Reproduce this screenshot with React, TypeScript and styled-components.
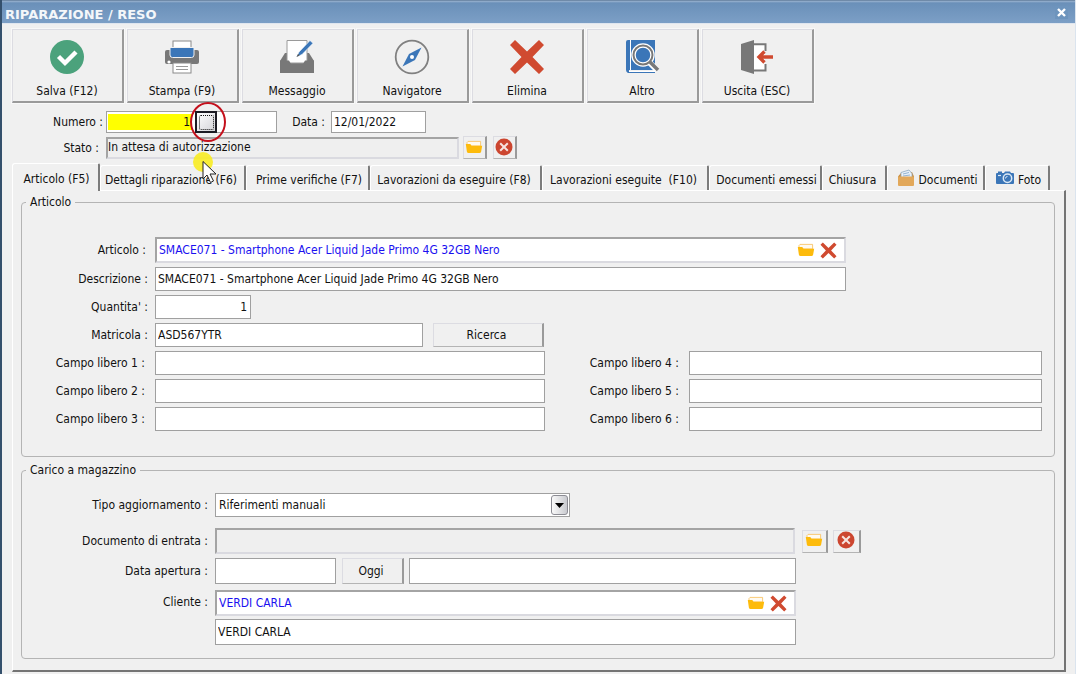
import React from "react";
import styled, { createGlobalStyle, css } from "styled-components";

const GlobalStyle = createGlobalStyle`
  * { box-sizing: border-box; }
  body { margin: 0; background: #f0f0f0; }
  body, button, input, select {
    font-family: "DejaVu Sans Condensed", "DejaVu Sans", sans-serif;
    font-size: 12px;
    line-height: 16px;
    color: #111;
  }
  svg { display: block; flex: none; }
`;

/* ---------- window ---------- */

const Window = styled.main`
  position: relative;
  min-height: 100vh;
  padding-bottom: 3px;
  border-left: 2px solid #34506c;
  border-right: 1px solid #dbe4ee;
  background: #f0f0f0;
`;

const TitleBar = styled.header`
  display: flex;
  align-items: center;
  justify-content: space-between;
  height: 24px;
  padding: 5px 7px 0 3px;
  border-top: 1px solid #6f8aa8;
  border-bottom: 1px solid #dfe6ef;
  background: linear-gradient(#9ab3cf 0, #6a90b9 2px, #7c9fc6 100%);
`;

const Title = styled.h1`
  margin: 0;
  font-family: "DejaVu Sans", sans-serif;
  font-size: 13px;
  line-height: 16px;
  font-weight: bold;
  color: #f4f7fa;
`;

const CloseButton = styled.button`
  display: grid;
  place-items: center;
  width: 13px;
  height: 13px;
  margin-bottom: 5px;
  padding: 0;
  border: 1px solid #6d94bd;
  background: #6d94bd;
`;

/* ---------- toolbar ---------- */

const Toolbar = styled.nav`
  display: flex;
  gap: 3px;
  padding: 5px 10px 0;
`;

const ToolButton = styled.button`
  display: flex;
  flex-direction: column;
  align-items: center;
  gap: 8px;
  width: 112px;
  height: 74px;
  padding: 9px 1px 0 0;
  border: solid;
  border-color: #dcdce2 #9a9a9a #9a9a9a #dcdce2;
  border-width: 1px 2px 2px 1px;
  background: #f0f0f0;
  outline: 1px solid #f8f8f8;
`;

/* ---------- fields ---------- */

const TextInput = styled.input<{ $w?: number; $h?: number; $right?: boolean }>`
  width: ${(p) => (p.$w ? `${p.$w}px` : "100%")};
  height: ${(p) => p.$h ?? 24}px;
  padding: 0 3px 0 2px;
  border: 1px solid #a0a0a0;
  border-radius: 0;
  outline: none;
  background: #fff;
  text-align: ${(p) => (p.$right ? "right" : "left")};
`;

const sunken = css`
  border: 2px solid;
  border-color: #a4a4a4 #dadae0 #dadae0 #a4a4a4;
`;

const LookupBox = styled.div<{ $w: number }>`
  ${sunken}
  display: flex;
  align-items: center;
  width: ${(p) => p.$w}px;
  height: 26px;
  padding-right: 4px;
  background: #fff;
`;

const LookupInput = styled.input`
  flex: 1;
  min-width: 0;
  padding: 0 2px;
  border: 0;
  outline: none;
  background: transparent;
  color: #1a10f0;
`;

const LookupButton = styled.button`
  display: grid;
  place-items: center;
  width: 23px;
  height: 20px;
  padding: 0;
  border: 0;
  background: transparent;
`;

const ReadOnlyInput = styled.input<{ $w: number; $h: number }>`
  ${sunken}
  width: ${(p) => p.$w}px;
  height: ${(p) => p.$h}px;
  padding: 0 0 2px;
  outline: none;
  background: #efefef;
`;

const raised = css`
  border: 1px solid;
  border-color: #dcdce2 #9a9a9a #b4b4b4 #dcdce2;
  border-right-width: 2px;
  background: #f0f0f0;
`;

const PushButton = styled.button<{ $w: number; $h: number }>`
  ${raised}
  width: ${(p) => p.$w}px;
  height: ${(p) => p.$h}px;
  padding: 0 3px 0 0;
`;

const IconButton = styled.button<{ $w: number }>`
  ${raised}
  display: grid;
  place-items: center;
  width: ${(p) => p.$w}px;
  height: 23px;
  padding: 0 2px 2px 0;
`;

/* ---------- record header ---------- */

const RecordHeader = styled.section`
  display: grid;
  gap: 3px;
  padding: 8px 10px 0;
`;

const HeaderRow = styled.div`
  display: flex;
  align-items: center;
`;

const HeaderLabel = styled.label<{ $w: number; $gap: number }>`
  width: ${(p) => p.$w}px;
  padding-right: ${(p) => p.$gap}px;
  text-align: right;
  white-space: nowrap;
`;

const NumberBox = styled.div`
  display: flex;
  align-items: center;
  width: 171px;
  height: 22px;
  border: 1px solid #a0a0a0;
  background: #fff;
`;

const NumberInput = styled.input`
  width: 84px;
  height: 16px;
  margin-left: 1px;
  padding: 0 2px 0 0;
  border: 0;
  outline: none;
  background: #ff0;
  text-align: right;
`;

const SuffixInput = styled.input`
  flex: 1;
  min-width: 0;
  height: 18px;
  border: 0;
  outline: none;
`;

const PickButton = styled.button`
  display: grid;
  place-items: center;
  width: 22px;
  height: 22px;
  margin-left: 3px;
  padding: 0;
  border: 2px solid #1c1c24;
  background: linear-gradient(135deg, #fff, #d4d4d8);

  &::after {
    content: "";
    width: 13px;
    height: 13px;
    border: 1px dotted #111;
    border-radius: 2px;
  }
`;

const StateButtons = styled.div`
  display: flex;
  gap: 6px;
  padding-left: 4px;
`;

/* ---------- tabs ---------- */

const TabList = styled.div`
  display: flex;
  align-items: flex-end;
  padding: 4px 10px 0;
`;

const Tab = styled.button<{ $w: number; $active?: boolean; $tight?: boolean }>`
  position: relative;
  display: flex;
  align-items: center;
  justify-content: center;
  gap: 4px;
  width: ${(p) => p.$w}px;
  height: ${(p) => (p.$active ? 28 : 25)}px;
  margin-bottom: ${(p) => (p.$active ? -1 : 0)}px;
  padding: ${(p) => (p.$tight ? "4px 3px 0 0" : p.$active ? "2px 0 0 2px" : "4px 0 0 3px")};
  border: solid;
  border-width: 1px 2px 0 1px;
  border-color: #fff #7c7c7c #fff #fff;
  border-radius: 3px 2px 0 0;
  background: #f0f0f0;
  white-space: pre;
  z-index: ${(p) => (p.$active ? 1 : 0)};

  > svg { margin-bottom: 4px; }
`;

const TabPanel = styled.section`
  display: grid;
  gap: 5px;
  margin: 0 9px 0 10px;
  padding: 3px 9px 11px 8px;
  border: solid;
  border-width: 1px 2px 2px 1px;
  border-color: #fff #747474 #747474 #fff;
`;

const Group = styled.fieldset<{ $pad: string }>`
  min-width: 0;
  margin: 0;
  padding: ${(p) => p.$pad};
  border: 1px solid #b4b4b4;
  border-radius: 4px;
`;

const Legend = styled.legend`
  margin-left: 4px;
  padding: 0 4px;
`;

const Rows = styled.div`
  display: grid;
  gap: 4px;
`;

const Row = styled.div`
  display: flex;
  align-items: center;
`;

const RowLabel = styled.label<{ $w: number; $gap?: number }>`
  flex: none;
  width: ${(p) => p.$w}px;
  padding-right: ${(p) => p.$gap ?? 7}px;
  text-align: right;
  white-space: nowrap;
`;

const FreeFields = styled.div`
  display: grid;
  grid-template-columns: 524px minmax(200px, 1fr);
  row-gap: 4px;
`;

const Spaced = styled.div<{ $left: number }>`
  display: flex;
  align-items: center;
  gap: 5px;
  padding-left: ${(p) => p.$left}px;
`;

const TypeRow = styled(Row)`
  margin-bottom: 7px;
`;

const SelectBox = styled.div`
  display: grid;
  align-items: center;
  width: 355px;

  > * { grid-area: 1 / 1; }
`;

const Select = styled.select`
  appearance: none;
  width: 100%;
  height: 24px;
  padding: 0 24px 0 3px;
  border: 1px solid #a0a0a0;
  border-radius: 0;
  outline: none;
  background: #fff;
`;

const SelectArrow = styled.span`
  display: grid;
  place-items: center;
  justify-self: end;
  width: 17px;
  height: 20px;
  margin-right: 2px;
  border: 1px solid #8c8c94;
  border-radius: 3px;
  background: linear-gradient(90deg, #fafafa, #c9cacf);
  pointer-events: none;
`;

const Stack = styled.div`
  display: grid;
  gap: 3px;
`;

const ClientRow = styled(Row)`
  align-items: flex-start;
  margin-top: 2px;

  > label { padding-top: 4px; }
`;

/* ---------- pointer highlight ---------- */

const Ring = styled.span`
  position: absolute;
  left: 188px;
  top: 102px;
  width: 36px;
  height: 40px;
  border: 2px solid #c4101c;
  border-radius: 50%;
  pointer-events: none;
  z-index: 2;
`;

const Pointer = styled.svg`
  position: absolute;
  left: 190px;
  top: 149px;
  pointer-events: none;
  z-index: 3;
`;

/* ---------- icons ---------- */

const SaveIcon = () => (
  <svg width="36" height="36" viewBox="0 0 36 36">
    <circle cx="18" cy="18" r="17" fill="#4ba27c" />
    <path d="m9.500 17.500 6.500 6.500L27 13" fill="none" stroke="#fff" strokeWidth="4.400" />
  </svg>
);

const PrintIcon = () => (
  <svg width="36" height="36" viewBox="0 0 36 36">
    <rect x="9" y="2" width="18" height="10" fill="#fff" stroke="#8a8a8a" />
    <path d="M3 11h30q2 0 2 2v10q0 2-2 2H3q-2 0-2-2V13q0-2 2-2Z" fill="#787878" />
    <path d="M6 8.500h24V16q0 2.500-2.500 2.500h-19Q6 18.500 6 16Z" fill="#3b76b8" stroke="#f0f0f0" />
    <circle cx="5" cy="23" r="1.600" fill="#fff" />
    <rect x="9" y="24" width="18" height="10" fill="#fff" stroke="#8a8a8a" />
    <path d="M12 27.500h12M12 30.500h12" stroke="#999" />
  </svg>
);

const MessageIcon = () => (
  <svg width="36" height="36" viewBox="0 0 36 36">
    <path d="M6 14 1 22v12h34V22l-5-8Z" fill="#787878" />
    <path d="M8 1.500h20V22q0 2-2 2H10q-2 0-2-2Z" fill="#fff" stroke="#9a9a9a" />
    <path d="M1 21.500h9l2 3.500h12l2-3.500h9V34H1Z" fill="#787878" />
    <path d="m17.500 18 2.500-5L31 1.500l3 2.800L23 15.500Z" fill="#3b76b8" stroke="#fff" strokeWidth=".6" />
    <path d="m17.500 18 1.500-3 1.700 1.600Z" fill="#555" />
  </svg>
);

const CompassIcon = () => (
  <svg width="36" height="36" viewBox="0 0 36 36">
    <circle cx="18" cy="18" r="16.300" fill="none" stroke="#808080" strokeWidth="1.800" />
    <path d="M27.500 8.500 21 21 8.500 27.500 15 15Z" fill="#3b76b8" />
    <circle cx="18" cy="18" r="2" fill="#fff" />
  </svg>
);

const CrossIcon = ({ size = 36 }: { size?: number }) => (
  <svg width={size} height={size} viewBox="0 0 36 36">
    <path
      d="M6 1 18 12.500 30 1 35 6 23.500 18 35 30 30 35 18 23.500 6 35 1 30 12.500 18 1 6Z"
      fill="#d04a30"
    />
  </svg>
);

const BookIcon = () => (
  <svg width="36" height="36" viewBox="0 0 36 36">
    <path d="M4 1h27v30H5v2h26v1H4q-2-1-2-3V3q0-2 2-2Z" fill="#3b76b8" />
    <path d="M6.500 1v30M5 32.500h26" stroke="#fff" />
    <path d="m25 23 8 8" stroke="#fff" strokeWidth="6" />
    <circle cx="19" cy="16" r="9.500" fill="#3b76b8" stroke="#fff" strokeWidth="4.500" />
    <circle cx="19" cy="16" r="9.500" fill="none" stroke="#787878" strokeWidth="2" />
    <path d="m26 23 8 8" stroke="#787878" strokeWidth="3.500" />
  </svg>
);

const ExitIcon = () => (
  <svg width="36" height="36" viewBox="0 0 36 36">
    <path d="M14 6h12v25H14Z" fill="#fff" />
    <path d="M15 5.200h11.500V12M26.500 25v6.500H15" fill="none" stroke="#787878" strokeWidth="2" />
    <path d="M2 5 15 1v34L2 31Z" fill="#787878" />
    <path d="M19.500 18H34M25.500 12.500 20 18l5.500 5.500" fill="none" stroke="#d04a30" strokeWidth="3.400" />
  </svg>
);

const FolderIcon = () => (
  <svg width="18" height="14" viewBox="0 0 18 14">
    <path d="M2 6V2.500L3 1.400h12.600V6Z" fill="#fffaf0" stroke="#f8c468" strokeWidth=".9" />
    <path d="M.8 4h4.500l1.200 1.700h10.700l-1.100 6q-.3 1.300-1.600 1.300h-11q-1.300 0-1.600-1.300Z" fill="#fdbb0c" />
  </svg>
);

const CancelIcon = () => (
  <svg width="18" height="18" viewBox="0 0 18 18">
    <circle cx="9" cy="9" r="8.500" fill="#cc4630" />
    <path d="m5.200 5.200 7.600 7.600m0-7.600-7.600 7.600" stroke="#f6e4e0" strokeWidth="2" />
  </svg>
);

const DocumentsIcon = () => (
  <svg width="18" height="18" viewBox="0 0 18 18">
    <path d="M1 7.500 4 4l11-1 2 4.500v2H1Z" fill="#c98b3a" />
    <path d="m4 3.500 8-2.500 3 3.500V10H4Z" fill="#e9f1f8" stroke="#8fa9c0" strokeWidth=".8" />
    <path d="m6 5 6-1.500M6 7l7-1" stroke="#7da3c8" strokeWidth=".8" />
    <rect x="1" y="7.500" width="16" height="9.500" rx="1" fill="#e2a85a" />
  </svg>
);

const CameraIcon = () => (
  <svg width="18" height="16" viewBox="0 0 18 16">
    <path d="M1 3h1V1.500h4V3h2l1-1.500h5L15 3h2q1 0 1 1v9q0 1-1 1H1q-1 0-1-1V4q0-1 1-1Z" fill="#3b76b8" />
    <circle cx="11.500" cy="8.300" r="4.200" fill="#3b76b8" stroke="#dce9f5" strokeWidth="1.500" />
    <path d="M9.500 8.500a2 2 0 0 1 2-2" fill="none" stroke="#dce9f5" />
    <path d="M2 5.500h3" stroke="#dce9f5" strokeWidth="1.200" />
  </svg>
);

/* ---------- data ---------- */

const tools = [
  { label: "Salva (F12)", icon: <SaveIcon /> },
  { label: "Stampa (F9)", icon: <PrintIcon /> },
  { label: "Messaggio", icon: <MessageIcon /> },
  { label: "Navigatore", icon: <CompassIcon /> },
  { label: "Elimina", icon: <CrossIcon /> },
  { label: "Altro", icon: <BookIcon /> },
  { label: "Uscita (ESC)", icon: <ExitIcon /> },
];

const tabs = [
  { label: "Articolo (F5)", width: 88 },
  { label: "Dettagli riparazione (F6)", width: 146, tight: true },
  { label: "Prime verifiche (F7)", width: 124 },
  { label: "Lavorazioni da eseguire (F8)", width: 172, tight: true },
  { label: "Lavorazioni eseguite  (F10)", width: 167, tight: true },
  { label: "Documenti emessi", width: 113 },
  { label: "Chiusura", width: 65, tight: true },
  { label: "Documenti", width: 98, icon: <DocumentsIcon /> },
  { label: "Foto", width: 65, icon: <CameraIcon /> },
];

const articleName = "SMACE071 - Smartphone Acer Liquid Jade Primo 4G 32GB Nero";

function Lookup({ id, width, value }: { id: string; width: number; value: string }) {
  return (
    <LookupBox $w={width}>
      <LookupInput id={id} defaultValue={value} />
      <LookupButton type="button" aria-label="Apri"><FolderIcon /></LookupButton>
      <LookupButton type="button" aria-label="Rimuovi"><CrossIcon size={17} /></LookupButton>
    </LookupBox>
  );
}

export default function App() {
  return (
    <>
      <GlobalStyle />
      <Window>
        <TitleBar>
          <Title>RIPARAZIONE / RESO</Title>
          <CloseButton type="button" aria-label="Chiudi">
            <svg width="9" height="9" viewBox="0 0 9 9">
              <path d="m1 1 7 7m0-7-7 7" stroke="#fff" strokeWidth="2.400" />
            </svg>
          </CloseButton>
        </TitleBar>

        <Toolbar>
          {tools.map((t) => (
            <ToolButton key={t.label} type="button">
              {t.icon}
              <span>{t.label}</span>
            </ToolButton>
          ))}
        </Toolbar>

        <RecordHeader>
          <HeaderRow>
            <HeaderLabel htmlFor="numero" $w={94} $gap={3}>Numero :</HeaderLabel>
            <NumberBox>
              <NumberInput id="numero" defaultValue="1" />
              <PickButton type="button" aria-label="Scegli numero" />
              <SuffixInput aria-label="Suffisso" />
            </NumberBox>
            <HeaderLabel htmlFor="data" $w={54} $gap={6}>Data :</HeaderLabel>
            <TextInput id="data" $w={95} $h={22} defaultValue="12/01/2022" />
          </HeaderRow>
          <HeaderRow>
            <HeaderLabel htmlFor="stato" $w={94} $gap={7}>Stato :</HeaderLabel>
            <ReadOnlyInput id="stato" $w={353} $h={22} readOnly defaultValue="In attesa di autorizzazione" />
            <StateButtons>
              <IconButton type="button" $w={24} aria-label="Apri stato"><FolderIcon /></IconButton>
              <IconButton type="button" $w={24} aria-label="Annulla stato"><CancelIcon /></IconButton>
            </StateButtons>
          </HeaderRow>
        </RecordHeader>

        <TabList role="tablist">
          {tabs.map((t, i) => (
            <Tab
              key={t.label}
              type="button"
              role="tab"
              aria-selected={i === 0}
              $w={t.width}
              $active={i === 0}
              $tight={t.tight}
            >
              {t.icon}
              <span>{t.label}</span>
            </Tab>
          ))}
        </TabList>

        <TabPanel role="tabpanel">
          <Group $pad="27px 12px 25px 0">
            <Legend>Articolo</Legend>
            <Rows>
              <Row>
                <RowLabel htmlFor="articolo" $w={133} $gap={9}>Articolo :</RowLabel>
                <Lookup id="articolo" width={691} value={articleName} />
              </Row>
              <Row>
                <RowLabel htmlFor="descrizione" $w={133}>Descrizione :</RowLabel>
                <TextInput id="descrizione" $w={691} defaultValue={articleName} />
              </Row>
              <Row>
                <RowLabel htmlFor="quantita" $w={133}>Quantita' :</RowLabel>
                <TextInput id="quantita" $w={96} $right defaultValue="1" />
              </Row>
              <Row>
                <RowLabel htmlFor="matricola" $w={133}>Matricola :</RowLabel>
                <TextInput id="matricola" $w={268} defaultValue="ASD567YTR" />
                <Spaced $left={10}>
                  <PushButton type="button" $w={111} $h={24}>Ricerca</PushButton>
                </Spaced>
              </Row>
              <FreeFields>
                {[1, 4, 2, 5, 3, 6].map((n) => (
                  <Row key={n}>
                    <RowLabel htmlFor={`campo${n}`} $w={n < 4 ? 133 : 143} $gap={10}>
                      {`Campo libero ${n} :`}
                    </RowLabel>
                    <TextInput id={`campo${n}`} $w={n < 4 ? 390 : undefined} />
                  </Row>
                ))}
              </FreeFields>
            </Rows>
          </Group>

          <Group $pad="15px 12px 13px 0">
            <Legend>Carico a magazzino</Legend>
            <Rows>
              <TypeRow>
                <RowLabel htmlFor="tipo" $w={193}>Tipo aggiornamento :</RowLabel>
                <SelectBox>
                  <Select id="tipo" defaultValue="manuali">
                    <option value="manuali">Riferimenti manuali</option>
                  </Select>
                  <SelectArrow>
                    <svg width="9" height="5" viewBox="0 0 9 5"><path d="M0 0h9L4.500 5Z" fill="#000" /></svg>
                  </SelectArrow>
                </SelectBox>
              </TypeRow>
              <Row>
                <RowLabel htmlFor="documento" $w={193}>Documento di entrata :</RowLabel>
                <ReadOnlyInput id="documento" $w={580} $h={26} readOnly />
                <Spaced $left={7}>
                  <IconButton type="button" $w={26} aria-label="Apri documento"><FolderIcon /></IconButton>
                  <IconButton type="button" $w={28} aria-label="Annulla documento"><CancelIcon /></IconButton>
                </Spaced>
              </Row>
              <Row>
                <RowLabel htmlFor="apertura" $w={193}>Data apertura :</RowLabel>
                <TextInput id="apertura" $w={121} $h={26} />
                <Spaced $left={6}>
                  <PushButton type="button" $w={62} $h={26}>Oggi</PushButton>
                  <TextInput aria-label="Note apertura" $w={387} $h={26} />
                </Spaced>
              </Row>
              <ClientRow>
                <RowLabel htmlFor="cliente" $w={193}>Cliente :</RowLabel>
                <Stack>
                  <Lookup id="cliente" width={581} value="VERDI CARLA" />
                  <TextInput aria-label="Nome cliente" $w={581} $h={26} defaultValue="VERDI CARLA" />
                </Stack>
              </ClientRow>
            </Rows>
          </Group>
        </TabPanel>

        <Ring />
        <Pointer width="28" height="36" viewBox="0 0 28 36">
          <circle cx="11" cy="13" r="10" fill="#f8ec1c" fillOpacity=".88" />
          <path d="M11 12.500v17.500l4-4 3.500 7.500 3-1.500-3.500-7h6Z" fill="#fff" stroke="#222" />
        </Pointer>
      </Window>
    </>
  );
}
